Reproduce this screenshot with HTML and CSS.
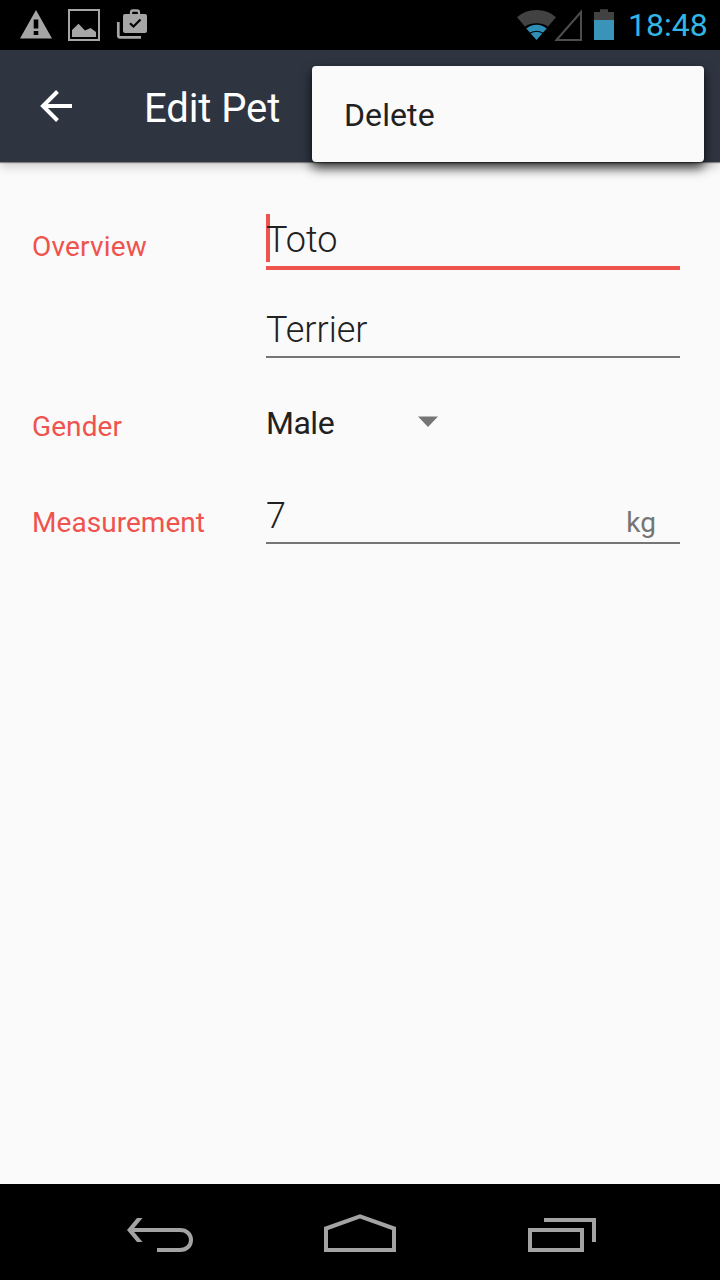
FILE: index.html
```html
<!DOCTYPE html>
<html lang="en">
<head>
<meta charset="utf-8">
<title>Edit Pet</title>
<link rel="stylesheet" href="styles.css">
</head>
<body>
<div class="screen">
  <header class="status">
    <svg class="status-left" width="160" height="50" viewBox="0 0 160 50">
      <path fill="#a6a6a6" fill-rule="evenodd" d="M36 10 52 38.500H20ZM33.700 19.500V28.500H38.300V19.500ZM33.700 31V35H38.300V31Z"/>
      <path fill="none" stroke="#a6a6a6" stroke-width="2" d="M69 10H99V40H69Z"/>
      <path fill="#a6a6a6" d="M72 30 78.500 23.800 85 30.500 90.500 28 96 32V37H72Z"/>
      <path fill="none" stroke="#a6a6a6" stroke-width="2.700" d="M118.300 22V35.500Q118.300 37.300 120 37.300H141"/>
      <path fill="none" stroke="#a6a6a6" stroke-width="2.300" d="M131 15V12.500Q131 10.500 133 10.500H137Q139 10.500 139 12.500V15"/>
      <rect x="123" y="14" width="24" height="19" rx="2" fill="#a6a6a6"/>
      <path fill="none" stroke="#000" stroke-width="2.200" d="M130 23.200 133.500 26.500 140.500 19.500"/>
    </svg>
    <svg class="status-right" width="110" height="50" viewBox="510 0 110 50">
      <path fill="#424242" d="M536.500 40 517 17.200Q525 10 536.500 10T556 17.200Z"/>
      <path fill="#000" d="M536.500 40 525 26.500Q530 23.300 536.500 23.300T548 26.500Z"/>
      <path fill="#2e8fb9" d="M536.500 40 526.300 28.500Q530.500 24.700 536.500 24.700T546.700 28.500Z"/>
      <path fill="none" stroke="#000" stroke-width="1.200" d="M528.500 34Q536.500 28.500 544.500 34"/>
      <path fill="none" stroke="#4d4d4d" stroke-width="2" d="M556.500 40 581 12V40Z"/>
      <path fill="#424242" d="M594 12H600V9.300H608V12H614V20H594Z"/>
      <path fill="#3a93b8" d="M594 20H614V40H594Z"/>
    </svg>
    <span class="clock">18:48</span>
  </header>
  <nav class="appbar">
    <svg class="back" width="40" height="40" viewBox="36 86 40 40">
      <path fill="none" stroke="#fff" stroke-width="4" d="M72 106H43M57.500 91.500 43 106 57.500 120.500"/>
    </svg>
    <h1 class="title">Edit Pet</h1>
    <div class="menu"><span class="menu-item">Delete</span></div>
  </nav>
  <main class="form">
    <section class="row overview">
      <label class="label">Overview</label>
      <div class="fields">
        <div class="field focused"><span class="cursor"></span><span class="value">Toto</span></div>
        <div class="field"><span class="value">Terrier</span></div>
      </div>
    </section>
    <section class="row gender">
      <label class="label">Gender</label>
      <div class="spinner">
        <span class="choice">Male</span>
        <svg class="arrow" width="20" height="12" viewBox="0 0 20 12"><path fill="#757575" d="M0 .5H20L10 11Z"/></svg>
      </div>
    </section>
    <section class="row measurement">
      <label class="label">Measurement</label>
      <div class="field with-unit"><span class="value">7</span><span class="unit">kg</span></div>
    </section>
  </main>
  <footer class="softkeys">
    <svg width="720" height="96" viewBox="0 1184 720 96" fill="none" stroke="#a3a3a3" stroke-width="4">
      <path d="M157 1250H180C187 1250 191 1245.500 191 1240C191 1234.500 187 1230 180 1230H131"/>
      <path fill="#a3a3a3" stroke="none" d="M137 1218H142.500L132.500 1230 142.500 1242H137L127 1230Z"/>
      <path d="M326 1250V1228.500L360 1216.300 394 1228.500V1250Z"/>
      <path d="M530 1230H582V1250H530Z"/>
      <path d="M544 1220H594V1242"/>
    </svg>
  </footer>
</div>
</body>
</html>
```
FILE: styles.css
```css
* { box-sizing: border-box; }
body { margin: 0; font-family: Roboto, sans-serif; background: #fafafa; color: #212121; }
.screen { width: 720px; height: 1280px; display: flex; flex-direction: column; overflow: hidden; }
svg { display: block; flex: none; }
.status { height: 50px; flex: none; display: flex; background: #000; }
.status-right { margin-left: 350px; }
.clock { margin-left: 8px; font-size: 32px; line-height: 51px; color: #33b5e5; white-space: nowrap; }
.appbar {
  position: relative; height: 112px; flex: none; display: flex; align-items: center;
  padding-left: 36px; background: #2e3541;
  box-shadow: 0 1px 1px rgba(0,0,0,.4), 0 4px 10px rgba(0,0,0,.2);
}
.title { margin: 6px 0 0 68px; font-size: 40px; line-height: 48px; font-weight: 400; letter-spacing: -.1px; color: #fff; white-space: nowrap; }
.menu {
  position: absolute; left: 312px; top: 16px; width: 392px; height: 96px; padding: 28px 32px;
  background: #fafafa; border-radius: 4px;
  box-shadow: 0 6px 12px rgba(0,0,0,.75), 0 1px 3px rgba(0,0,0,.3);
}
.menu-item { display: block; font-size: 32px; line-height: 42px; letter-spacing: .1px; }
.form { flex: 1; padding: 52px 40px 0 32px; }
.row { display: grid; grid-template-columns: 234px 414px; align-items: start; }
.label { font-size: 28px; line-height: 40px; letter-spacing: .1px; color: #ef534e; }
.overview .label { padding-top: 13px; letter-spacing: .2px; }
.fields { display: grid; gap: 34px; }
.field { height: 54px; display: flex; border-bottom: 2px solid #757575; }
.focused { position: relative; height: 56px; border-bottom: 4px solid #ef534e; }
.cursor { position: absolute; left: 0; top: 0; width: 4px; height: 48px; background: #ef534e; }
.value { position: relative; font-size: 36px; line-height: 52px; font-weight: 300; }
.gender { height: 43px; margin-top: 45px; }
.gender .label { padding-top: 4px; }
.spinner { width: 172px; display: flex; justify-content: space-between; align-items: center; }
.choice { font-size: 32px; line-height: 40px; letter-spacing: -.5px; }
.arrow { margin-bottom: 3px; }
.measurement { margin-top: 44px; }
.measurement .label { padding-top: 13px; letter-spacing: .05px; }
.with-unit { justify-content: space-between; padding-right: 24px; }
.unit { padding-top: 13px; font-size: 28px; line-height: 40px; color: #757575; }
.softkeys { height: 96px; flex: none; background: #000; }
```
